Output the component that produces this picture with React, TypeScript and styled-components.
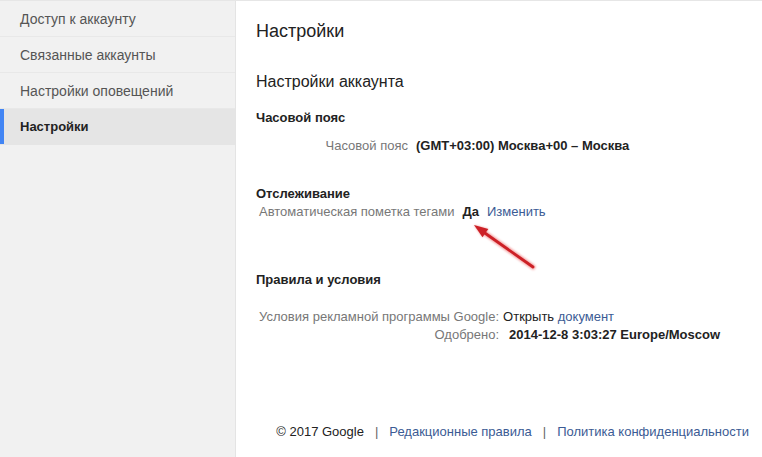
import styled, { createGlobalStyle } from "styled-components";

const GlobalStyle = createGlobalStyle`
  html, body {
    margin: 0;
    padding: 0;
    background: #fff;
  }
  body {
    font-family: "Liberation Sans", Arial, sans-serif;
    color: #222;
  }
`;

const Page = styled.div`
  position: relative;
  display: flex;
  width: 762px;
  height: 457px;
  overflow: hidden;
  border-top: 1px solid #e6e6e6;
  box-sizing: border-box;
`;

const Sidebar = styled.nav`
  width: 235px;
  flex-shrink: 0;
  background: #f1f1f1;
  border-right: 1px solid #e4e4e4;
  display: flex;
  flex-direction: column;
`;

const NavItem = styled.div<{ $active?: boolean }>`
  height: 36px;
  display: flex;
  align-items: center;
  padding-left: 20px;
  font-size: ${(p) => (p.$active ? "13px" : "14px")};
  color: ${(p) => (p.$active ? "#222" : "#555")};
  font-weight: ${(p) => (p.$active ? "bold" : "normal")};
  background: ${(p) => (p.$active ? "#e5e5e5" : "transparent")};
  border-bottom: 1px solid ${(p) => (p.$active ? "#e5e5e5" : "#e8e8e8")};
  box-shadow: ${(p) => (p.$active ? "inset 4px 0 0 #4285f4" : "none")};
  box-sizing: border-box;
`;

const Main = styled.main`
  flex: 1;
  display: flex;
  flex-direction: column;
  padding: 20px 13px 0 20px;
`;

const Title = styled.h1`
  margin: 0;
  font-size: 18px;
  font-weight: normal;
  line-height: 20px;
  color: #222;
`;

const Subtitle = styled.h2`
  margin: 31px 0 0;
  font-size: 16px;
  font-weight: normal;
  line-height: 20px;
  color: #222;
`;

const Section = styled.h3<{ $gap: number }>`
  margin: ${(p) => p.$gap}px 0 0;
  font-size: 13px;
  font-weight: bold;
  line-height: 16px;
  color: #222;
`;

const FormGrid = styled.div<{ $gap: number; $labelWidth?: number }>`
  margin-top: ${(p) => p.$gap}px;
  display: grid;
  grid-template-columns: ${(p) => (p.$labelWidth ? `${p.$labelWidth}px` : "auto")} auto;
  justify-content: start;
  column-gap: 8px;
  row-gap: 2px;
  font-size: 13px;
  line-height: 16px;
`;

const Label = styled.div`
  text-align: right;
  color: #777;
`;

const Value = styled.div<{ $bold?: boolean; $pad?: number }>`
  color: #222;
  font-weight: ${(p) => (p.$bold ? "bold" : "normal")};
  padding-left: ${(p) => p.$pad ?? 0}px;
`;

const InlineRow = styled.div`
  margin-top: 2px;
  padding-left: 3px;
  display: flex;
  align-items: baseline;
  gap: 8px;
  font-size: 13px;
  line-height: 16px;
`;

const Gray = styled.span`
  color: #777;
`;

const Strong = styled.span`
  font-weight: bold;
  color: #222;
`;

const Link = styled.a`
  color: #3b5b94;
  text-decoration: none;
  cursor: pointer;
`;

const Footer = styled.footer`
  margin-top: 81px;
  display: flex;
  justify-content: flex-end;
  gap: 11px;
  font-size: 13px;
  line-height: 16px;
  color: #222;
`;

const Sep = styled.span`
  color: #666;
`;

const Arrow = styled.svg`
  position: absolute;
  left: 460px;
  top: 215px;
  width: 80px;
  height: 60px;
  overflow: visible;
`;

export default function App() {
  return (
    <>
      <GlobalStyle />
      <Page>
        <Sidebar>
          <NavItem>Доступ к аккаунту</NavItem>
          <NavItem>Связанные аккаунты</NavItem>
          <NavItem>Настройки оповещений</NavItem>
          <NavItem $active>Настройки</NavItem>
        </Sidebar>
        <Main>
          <Title>Настройки</Title>
          <Subtitle>Настройки аккаунта</Subtitle>

          <Section $gap={18}>Часовой пояс</Section>
          <FormGrid $gap={12} $labelWidth={152}>
            <Label>Часовой пояс</Label>
            <Value $bold>(GMT+03:00) Москва+00 – Москва</Value>
          </FormGrid>

          <Section $gap={32}>Отслеживание</Section>
          <InlineRow>
            <Gray>Автоматическая пометка тегами</Gray>
            <Strong>Да</Strong>
            <Link>Изменить</Link>
          </InlineRow>

          <Section $gap={52}>Правила и условия</Section>
          <FormGrid $gap={21} style={{ paddingLeft: 3, columnGap: 4 }}>
            <Label>Условия рекламной программы Google:</Label>
            <Value>
              Открыть <Link>документ</Link>
            </Value>
            <Label>Одобрено:</Label>
            <Value $bold $pad={6}>
              2014-12-8 3:03:27 Europe/Moscow
            </Value>
          </FormGrid>

          <Footer>
            <span>© 2017 Google</span>
            <Sep>|</Sep>
            <Link>Редакционные правила</Link>
            <Sep>|</Sep>
            <Link>Политика конфиденциальности</Link>
          </Footer>
        </Main>
        <Arrow viewBox="0 0 80 60">
          <defs>
            <filter id="glow" x="-30%" y="-30%" width="160%" height="160%">
              <feGaussianBlur stdDeviation="1" />
            </filter>
          </defs>
          <g filter="url(#glow)" opacity="0.5">
            <line x1="73" y1="51" x2="22" y2="15" stroke="#e84040" strokeWidth="5" strokeLinecap="round" />
            <polygon points="14,9 28.3,13 22.5,21.2" fill="#e84040" />
          </g>
          <line x1="73" y1="51" x2="22" y2="15" stroke="#cc2026" strokeWidth="2.8" strokeLinecap="round" />
          <polygon points="14,9 28.3,13 22.5,21.2" fill="#cc2026" />
        </Arrow>
      </Page>
    </>
  );
}
